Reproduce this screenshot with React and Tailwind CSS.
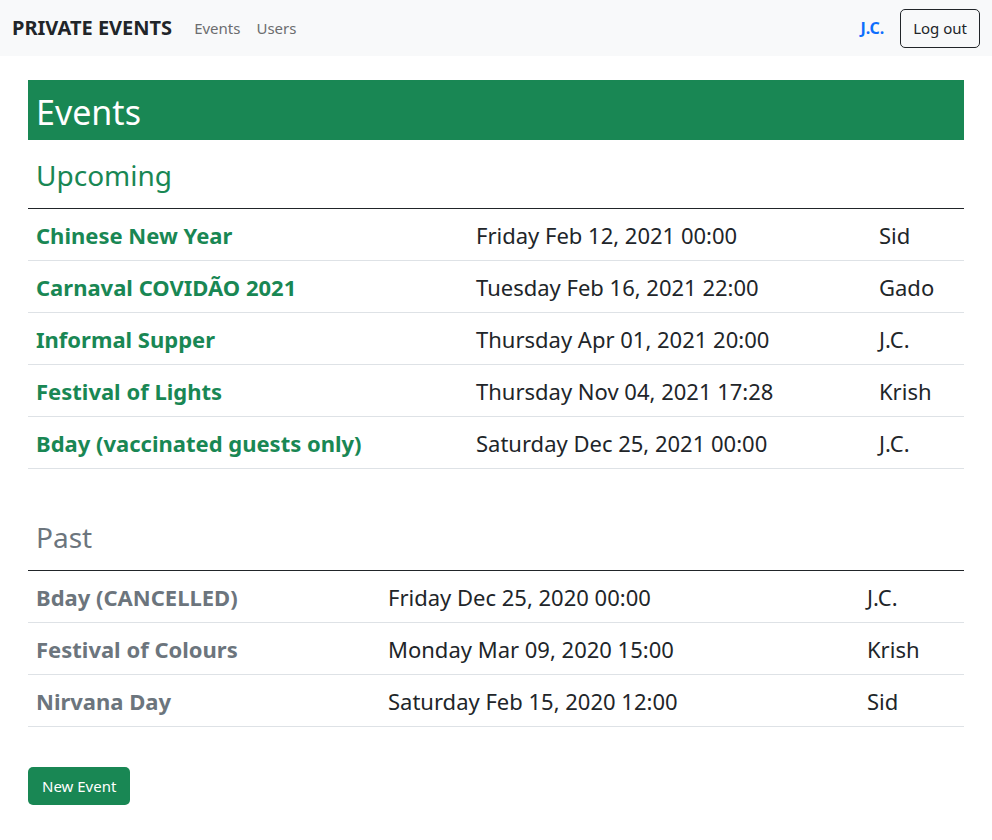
import React from 'react';

const upcoming = [
  { name: 'Chinese New Year', date: 'Friday Feb 12, 2021 00:00', host: 'Sid' },
  { name: 'Carnaval COVIDÃO 2021', date: 'Tuesday Feb 16, 2021 22:00', host: 'Gado' },
  { name: 'Informal Supper', date: 'Thursday Apr 01, 2021 20:00', host: 'J.C.' },
  { name: 'Festival of Lights', date: 'Thursday Nov 04, 2021 17:28', host: 'Krish' },
  { name: 'Bday (vaccinated guests only)', date: 'Saturday Dec 25, 2021 00:00', host: 'J.C.' }
];

const past = [
  { name: 'Bday (CANCELLED)', date: 'Friday Dec 25, 2020 00:00', host: 'J.C.' },
  { name: 'Festival of Colours', date: 'Monday Mar 09, 2020 15:00', host: 'Krish' },
  { name: 'Nirvana Day', date: 'Saturday Feb 15, 2020 12:00', host: 'Sid' }
];

const EventTable = ({ rows, cols, nameClass }) => (
  <div className="border-t border-[#212529]">
    {rows.map((row) => (
      <div
        key={row.name}
        className={`grid ${cols} h-[52px] items-center border-b border-[#dee2e6] pt-[2px] text-[22px] text-[#212529]`}
      >
        <div className={`pl-2 font-bold ${nameClass}`}>{row.name}</div>
        <div className="pl-2">{row.date}</div>
        <div className="pl-2">{row.host}</div>
      </div>
    ))}
  </div>
);

const App = () => {
  return (
    <div className="min-h-screen bg-white font-['Noto_Sans',sans-serif] text-[#212529]">
      {/* Navbar */}
      <nav className="flex h-[56px] items-center bg-[#f8f9fa] px-3">
        <span className="mr-[22px] text-[20px] font-bold text-[#212529]">PRIVATE EVENTS</span>
        <a className="mr-4 text-[15px] text-[#6c6d6f]">Events</a>
        <a className="text-[15px] text-[#6c6d6f]">Users</a>
        <div className="ml-auto flex items-center">
          <span className="mr-4 text-[16px] font-bold text-[#0d6efd]">J.C.</span>
          <button className="h-[39px] rounded-[5px] border border-[#212529] px-3 text-[15px] text-[#212529]">
            Log out
          </button>
        </div>
      </nav>

      <div className="mx-auto w-[936px] pt-6 pb-8">
        <div className="flex h-[60px] items-center bg-[#198754] pl-2 pt-[5px]">
          <h1 className="text-[34px] text-white">Events</h1>
        </div>

        <div className="flex h-[68px] items-center pl-2 pt-[2px]">
          <h2 className="text-[28px] text-[#198754]">Upcoming</h2>
        </div>
        <EventTable
          rows={upcoming}
          cols="grid-cols-[440px_403px_93px]"
          nameClass="text-[#198754]"
        />

        <div className="mt-[33px] flex h-[68px] items-center pl-2 pt-[2px]">
          <h2 className="text-[28px] text-[#6c757d]">Past</h2>
        </div>
        <EventTable
          rows={past}
          cols="grid-cols-[352px_479px_105px]"
          nameClass="text-[#6c757d]"
        />

        <button className="mt-[40px] h-[38px] rounded-[5px] bg-[#198754] px-[14px] text-[15px] text-white">
          New Event
        </button>
      </div>
    </div>
  );
};

export default App;
